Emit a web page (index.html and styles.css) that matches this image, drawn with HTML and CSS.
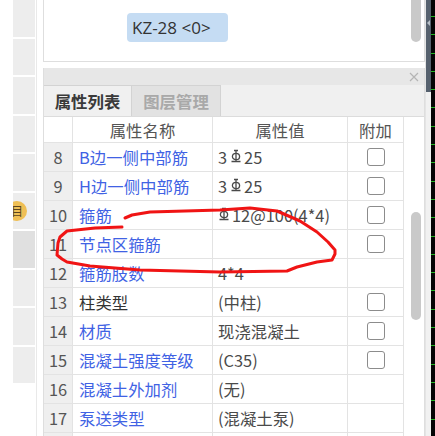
FILE: index.html
```
<!DOCTYPE html>
<html lang="zh">
<head>
<meta charset="utf-8">
<title>属性列表</title>
<link rel="stylesheet" href="styles.css">
</head>
<body>
<div class="left">
  <div class="tiles">
    <div class="tile"></div>
    <div class="tile"></div>
    <div class="tile"></div>
    <div class="tile"></div>
    <div class="tile"></div>
    <div class="tile badge-tile"><span class="badge">目</span></div>
    <div class="tile sel"></div>
    <div class="tile"></div>
    <div class="tile"></div>
    <div class="tile"></div>
  </div>
  <div class="vline"></div>
</div>

<div class="main">
  <div class="top">
    <div class="list">
      <div class="item prev">KZ-27 &lt;0&gt;</div>
      <div class="item chip">KZ-28 &lt;0&gt;</div>
    </div>
    <div class="vscroll"><div class="thumb thumb-top"></div></div>
  </div>

  <div class="props">
    <div class="titlebar">
      <svg class="close" viewBox="0 0 10 10" width="10" height="10"><path d="M1 1L9 9M9 1L1 9" stroke="#b4b4b4" stroke-width="1.2" fill="none"/></svg>
    </div>
    <div class="tabs">
      <div class="tab active">属性列表</div>
      <div class="tab">图层管理</div>
    </div>
    <div class="grid-wrap">
      <div class="grid">
        <div class="c idx hd"></div><div class="c hd">属性名称</div><div class="c hd">属性值</div><div class="c hd">附加</div>

        <div class="c idx">8</div><div class="c nm">B边一侧中部筋</div><div class="c val">3<svg class="hrb" viewBox="0 0 12 14"><path d="M4 1.5H8M6 1.5V12.5M1.5 12.5H10.5" stroke="#4a4a4a" stroke-width="1.3" fill="none"/><ellipse cx="6" cy="7.5" rx="3.6" ry="3.2" stroke="#4a4a4a" stroke-width="1.3" fill="none"/></svg>25</div><div class="c ck"><span class="cb"></span></div>

        <div class="c idx">9</div><div class="c nm">H边一侧中部筋</div><div class="c val">3<svg class="hrb" viewBox="0 0 12 14"><path d="M4 1.5H8M6 1.5V12.5M1.5 12.5H10.5" stroke="#4a4a4a" stroke-width="1.3" fill="none"/><ellipse cx="6" cy="7.5" rx="3.6" ry="3.2" stroke="#4a4a4a" stroke-width="1.3" fill="none"/></svg>25</div><div class="c ck"><span class="cb"></span></div>

        <div class="c idx">10</div><div class="c nm">箍筋</div><div class="c val"><svg class="hrb first" viewBox="0 0 12 14"><path d="M4 1.5H8M6 1.5V12.5M1.5 12.5H10.5" stroke="#4a4a4a" stroke-width="1.3" fill="none"/><ellipse cx="6" cy="7.5" rx="3.6" ry="3.2" stroke="#4a4a4a" stroke-width="1.3" fill="none"/></svg>12@100(4*4)</div><div class="c ck"><span class="cb"></span></div>

        <div class="c idx">11</div><div class="c nm">节点区箍筋</div><div class="c val"></div><div class="c ck"><span class="cb"></span></div>

        <div class="c idx">12</div><div class="c nm">箍筋肢数</div><div class="c val">4*4</div><div class="c ck"></div>

        <div class="c idx">13</div><div class="c nm dark">柱类型</div><div class="c val">(中柱)</div><div class="c ck"><span class="cb"></span></div>

        <div class="c idx">14</div><div class="c nm">材质</div><div class="c val">现浇混凝土</div><div class="c ck"><span class="cb"></span></div>

        <div class="c idx">15</div><div class="c nm">混凝土强度等级</div><div class="c val">(C35)</div><div class="c ck"><span class="cb"></span></div>

        <div class="c idx">16</div><div class="c nm">混凝土外加剂</div><div class="c val">(无)</div><div class="c ck"></div>

        <div class="c idx">17</div><div class="c nm">泵送类型</div><div class="c val">(混凝土泵)</div><div class="c ck"></div>

        <div class="c idx"></div><div class="c nm"></div><div class="c val"></div><div class="c ck"></div>
      </div>
      <div class="vscroll2"><div class="thumb thumb-grid"></div></div>
    </div>
  </div>
</div>

<div class="edge">
  <div class="edge-light"></div>
  <div class="edge-slate"><div class="slate-top"><span class="arrow"></span></div></div>
  <div class="edge-black"></div>
</div>

<svg class="annot" viewBox="0 0 435 436" width="435" height="436">
  <polyline points="122,227 95,228 67,231 60,237 58,243 57,255 62,259 67,262 90,266 140,270 220,272 287,271 297,267 317,262 332,260 335,254 335,250 328,242 317,232 300,221 277,211 250,208 220,210 150,212 132,215 125,218" fill="none" stroke="#f01414" stroke-width="3" stroke-linejoin="round" stroke-linecap="round"/>
</svg>
</body>
</html>
```
FILE: styles.css
```
* { box-sizing: border-box; }
html, body { margin: 0; padding: 0; }
body {
  width: 435px;
  height: 436px;
  overflow: hidden;
  position: relative;
  display: flex;
  background: #ffffff;
  font-family: "Noto Sans CJK SC", "Noto Sans", sans-serif;
  color: #333;
}

/* left strip */
.left {
  width: 43px;
  flex: none;
  display: flex;
  padding-left: 13px;
}
.tiles {
  width: 22px;
  display: flex;
  flex-direction: column;
  gap: 2px;
}
.tile {
  height: 36.5px;
  flex: none;
  background: #ededed;
  position: relative;
  overflow: hidden;
}
.tile.sel { background: #e0e0e0; }
.badge {
  position: absolute;
  left: -6px;
  top: 8px;
  width: 20px;
  height: 20px;
  border-radius: 50%;
  background: #efbf55;
  color: #5a4520;
  font-size: 12px;
  line-height: 20px;
  text-align: center;
}
.vline {
  width: 1px;
  margin-left: 1px;
  background: #e9e9e9;
}

/* main column */
.main {
  width: 382px;
  flex: none;
  display: flex;
  flex-direction: column;
}
.top {
  height: 62px;
  flex: none;
  border-left: 1px solid #dedede;
  border-right: 1px solid #dedede;
  border-bottom: 1px solid #dedede;
  display: flex;
  overflow: hidden;
  background: #fff;
}
.list {
  flex: 1;
  padding-left: 83px;
  display: flex;
  flex-direction: column;
  align-items: flex-start;
}
.item {
  height: 29px;
  line-height: 29px;
  font-family: "Open Sans", "Noto Sans CJK SC", sans-serif;
  font-size: 17px;
  color: #333;
  padding: 0 17px 0 5px;
  flex: none;
}
.item.prev { margin-top: -22px; margin-bottom: 6px; }
.item.chip {
  background: #c5dcf3;
  border-radius: 4px;
}
.vscroll {
  width: 20px;
  flex: none;
}
.thumb {
  width: 10px;
  margin-left: 7px;
  border-radius: 5px;
  background: #c9c9c9;
}
.thumb-top { margin-top: -6px; height: 48px; }

/* properties panel */
.props {
  flex: 1;
  margin-top: 6px;
  border-left: 1px solid #dedede;
  border-right: 1px solid #dedede;
  display: flex;
  flex-direction: column;
  min-height: 0;
}
.titlebar {
  height: 17px;
  flex: none;
  background: #e7e7e7;
  display: flex;
  align-items: center;
  justify-content: flex-end;
  padding-right: 5px;
}
.tabs {
  height: 32px;
  flex: none;
  background: #f0f0f0;
  display: flex;
  border-bottom: 1px solid #dcdcdc;
}
.tab {
  width: 89px;
  height: 31px;
  line-height: 31px;
  text-align: center;
  font-size: 16.4px;
  font-weight: bold;
  color: #a9a9a9;
  background: #e2e2e2;
  border: 1px solid #d3d3d3;
  border-bottom: none;
  border-left: none;
}
.tab.active {
  width: 88px;
  background: #f0f0f0;
  color: #3a3a3a;
}

.grid-wrap {
  flex: 1;
  display: flex;
  min-height: 0;
  overflow: hidden;
  background: #fff;
}
.grid {
  width: 360px;
  flex: none;
  display: grid;
  grid-template-columns: 29px 140px 135px 56px;
  grid-template-rows: 26px;
  grid-auto-rows: 29px;
  align-content: start;
}
.c {
  border-right: 1px solid #e3e3e3;
  border-bottom: 1px solid #e3e3e3;
  font-size: 16.4px;
  display: flex;
  align-items: center;
  white-space: nowrap;
  overflow: hidden;
}
.c.hd {
  justify-content: center;
  color: #555;
  background: #fff;
}
.c.idx {
  justify-content: center;
  background: #efefef;
  color: #555;
}
.c.idx.hd { background: #fff; }
.c.nm {
  padding-left: 6px;
  color: #4062e4;
}
.c.nm.dark { color: #333; }
.c.val {
  padding-left: 5px;
  color: #4a4a4a;
}
.c.ck { justify-content: center; }
.cb {
  width: 18px;
  height: 18px;
  border: 1.5px solid #8c8c8c;
  border-radius: 3px;
  background: #fff;
}
.hrb {
  width: 12px;
  height: 14px;
  margin: 0 2px 2px 3px;
}
.hrb.first { margin-left: 0; }

.vscroll2 {
  flex: 1;
  background: #fff;
}
.thumb-grid { margin-top: 95px; height: 108px; }

/* right edge */
.edge {
  width: 10px;
  flex: none;
  display: flex;
}
.edge-light { width: 1px; background: #e4e4e4; }
.edge-slate {
  width: 5px;
  background: #f1f1f1;
}
.slate-top {
  height: 92px;
  background: #56616e;
  position: relative;
}
.arrow {
  position: absolute;
  left: 1px;
  top: 20px;
  width: 0;
  height: 0;
  border-top: 3px solid transparent;
  border-bottom: 3px solid transparent;
  border-right: 3px solid #b8c0c8;
}
.edge-black {
  width: 4px;
  background: repeating-linear-gradient(to bottom, #050505 0, #050505 16px, #22b422 16px, #22b422 17px, #050505 17px, #050505 18.3px);
}

.annot {
  position: absolute;
  left: 0;
  top: 0;
  pointer-events: none;
}
```
